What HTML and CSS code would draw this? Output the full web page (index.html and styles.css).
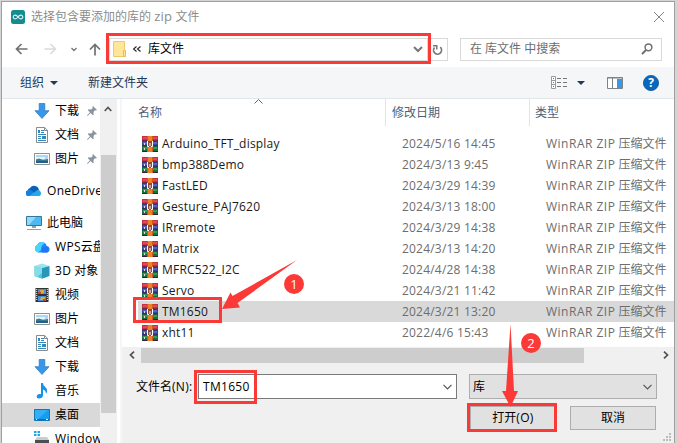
FILE: index.html
```html
<!DOCTYPE html>
<html lang="zh-CN">
<head>
<meta charset="utf-8">
<title>选择包含要添加的库的 zip 文件</title>
<link rel="stylesheet" href="styles.css">
</head>
<body>
<svg class="defs" width="0" height="0">
  <symbol id="rar" viewBox="0 0 16 16">
    <path fill="#c9303f" d="M0 0h16v5H0z"/><path fill="#e2485a" d="M1 1h14v2H1z"/>
    <path fill="#35449c" d="M0 5h16v5H0z"/><path fill="#5560c8" d="M1 6h14v2H1z"/>
    <path fill="#16713b" d="M0 10h16v5H0z"/><path fill="#2f9c58" d="M1 11h14v2H1z"/>
    <path fill="#332039" d="M0 4.500h16v.7H0zM0 9.600h16v.7H0zM0 15h16v1H0z"/>
    <path fill="#e9d5df" d="M2 7h1v2H2zM2 12h1v2H2z"/>
    <path fill="#d05a18" d="M5 0h6v16H5z"/><path fill="#ef7f28" d="M6 0h4v16H6z"/>
    <path fill="#8a4a3c" d="M5 5h6v6H5z"/><path fill="none" stroke="#fff" d="M5.500 5v5.500h1.500M10.500 5v5.500H9M8 7v3"/>
  </symbol>
  <symbol id="down" viewBox="0 0 16 16"><path fill="#3a96e6" stroke="#2377c4" stroke-width=".7" d="M5.200.5h5.600v7.200H15L8 15.500 1 7.700h4.200z"/></symbol>
  <symbol id="doc" viewBox="0 0 16 16"><path fill="#fff" stroke="#858c91" d="M2.500.5h8.200l2.800 2.800v12.200h-11z"/><path fill="none" stroke="#858c91" d="M10.500.5v3h3"/><path fill="none" stroke="#3487b9" d="M4 7.500h8M4 9.500h3M4 11.500h3M4 13.500h8M7 3.500h3M7 5.500h3"/><path fill="#3487b9" d="M4 3h2v3H4zM8 9h4v3H8z"/></symbol>
  <symbol id="pic" viewBox="0 0 16 16"><path fill="#fff" stroke="#8b9196" d="M.5 2.500h15v11H.5z"/><path fill="#acd8f5" d="M2 4h12v8H2z"/><path fill="#e9f5fb" d="M2 6h9v2H2z"/><path fill="#3d7990" d="M2 8.500l3-1 4 1.500 5-1V12H2z"/><path fill="#265e8a" d="M2 10h12v2H2z"/></symbol>
  <symbol id="cloud" viewBox="0 0 16 16"><path fill="#0a61bb" d="M2 10a3.500 3.500 0 0 1 2-5 5 5 0 0 1 9 2l-8 5z"/><path fill="#1480dd" d="M1.500 13A3 3 0 0 1 2 7.200c2-.8 3-.2 5 1.300l4 4.500z"/><path fill="#28a8ea" d="M3 13l8-5.800A3.200 3.200 0 0 1 13.500 13z"/></symbol>
  <symbol id="wps" viewBox="0 0 16 16"><path fill="#188cfa" d="M4 13.500A4 4 0 0 1 3.200 6a5 5 0 0 1 9.500 1 3.300 3.300 0 0 1 .3 6.500z"/><path fill="#46d5ff" d="M3.200 6a5 5 0 0 1 8-1.500C8 5 7 8 7 11l-3 2.500A4 4 0 0 1 3.200 6z"/><path fill="#2674f5" d="M8 9l3-1.500a3.400 3.400 0 0 1 2.500 6H8z"/></symbol>
  <symbol id="pc" viewBox="0 0 16 16"><path fill="#4db9f2" stroke="#347799" d="M.5 1.500h15v9H.5z"/><path fill="#92d9fb" d="M1 2h9l-7 8H1z"/><path fill="#8aa3af" d="M6 11h4v2H6zM1 14h14v1H1z"/></symbol>
  <symbol id="cube" viewBox="0 0 16 16"><path fill="#95e8f1" d="M.5 3L8 .5 15.500 3 8 5z"/><path fill="#50c5d5" d="M.5 3L8 5v10.800L.5 13z"/><path fill="#2698b8" d="M15.500 3L8 5v10.800l7.500-2.800z"/><path fill="#85dce8" d="M.5 3L8 5v5L3 14 .5 13z"/></symbol>
  <symbol id="film" viewBox="0 0 16 16"><path fill="#333" d="M1.500 1h13v14h-13z"/><path fill="#4a8ed8" d="M4 2h8v5H4zM4 9h8v5H4z"/><path fill="#e0ab35" d="M6 3h4v3l-3 1zM7 10h4v3H6z"/><path fill="#b84a3a" d="M4 5h3v2H4zM9 12h3v2H9z"/><path stroke="#eee" stroke-width="1" stroke-dasharray="1 1" d="M2.700 2v12M13.300 2v12"/></symbol>
  <symbol id="note" viewBox="0 0 16 16"><path fill="#1692e8" d="M7 0h2c0 4 5 4 4 9l-1 2c0-3-1.500-4-3-4.500v6c0 2-2 3-4.200 3C2 15.500 2 11.700 5 11c1-.2 1.500 0 2 .2z"/></symbol>
  <symbol id="desk" viewBox="0 0 16 16"><path fill="#169df0" stroke="#1775b2" d="M.5 2.500h15v11H.5z"/><path fill="#32aff8" d="M1 3h13L4 12H1z"/><path stroke="#156899" d="M1 12.500h14"/><path stroke="#fff" d="M2 12.500h1M12 12.500h2"/></symbol>
  <symbol id="drive" viewBox="0 0 16 16"><path fill="#20a6e5" d="M0 0h2.500v2H0zM3.500 0H6v2H3.500zM0 3h2.500v2H0zM3.500 3H6v2H3.500z"/><path fill="#c9cdd0" d="M3 6h10l2 3H1z"/><path fill="#4a4f52" d="M1 9h14v4H1z"/></symbol>
  <symbol id="pin" viewBox="0 0 10 10"><path fill="#89949e" d="M6 0l4 4-1.200.5L8 4.200 6.500 6l.2 2.400-.9.800L3.700 7 .5 10l-.5-.5L3 6.300.8 4.200l.8-.9 2.400.2L5.800 2 5.400 1z"/></symbol>
</svg>

<main class="window">
  <header class="titlebar">
    <svg class="logo" width="14" height="14" viewBox="0 0 14 14"><rect width="14" height="14" rx="2.500" fill="#128b91"/><path fill="none" stroke="#d9eeee" stroke-width="1.200" d="M7 7C5.500 4.700 2.300 4.500 2.300 7S5.500 9.300 7 7s4.700-2.500 4.700 0S8.500 9.300 7 7z"/></svg>
    <h1>选择包含要添加的库的 <i class="lt">zip</i> 文件</h1>
    <svg class="close" width="12" height="12" viewBox="0 0 12 12"><path stroke="#858585" d="M1 1l10 10M11 1L1 11"/></svg>
  </header>

  <nav class="navbar">
    <svg class="back" width="13" height="12" viewBox="0 0 13 12"><path fill="none" stroke="#707070" stroke-width="1.700" d="M12.500 6H1.500M6.500 1L1.500 6l5 5"/></svg>
    <svg class="fwd" width="13" height="12" viewBox="0 0 13 12"><path fill="none" stroke="#dadada" stroke-width="1.500" d="M.5 6h11M6.500 1l5 5-5 5"/></svg>
    <svg class="recent" width="6" height="5" viewBox="0 0 6 5"><path fill="none" stroke="#777" stroke-width="1.400" d="M.5 1L3 3.500 5.500 1"/></svg>
    <svg class="up" width="12" height="13" viewBox="0 0 12 13"><path fill="none" stroke="#707070" stroke-width="1.700" d="M6 12.500v-11M1 6.500l5-5 5 5"/></svg>
    <div class="address">
      <svg width="14" height="16" viewBox="0 0 14 16"><path fill="#ffe69b" stroke="#edc968" d="M.5.5h11v15H.5z"/><path fill="#ffe69b" stroke="#e9be4f" d="M10.500 9.500h2v6h-2z"/></svg>
      <svg class="chev" width="8" height="7" viewBox="0 0 8 7"><path fill="none" stroke="#222" stroke-width="1.100" d="M3.500.5l-3 2.500 3 2.500M7.500.5l-3 2.500 3 2.500"/></svg>
      <span>库文件</span>
      <svg class="drop" width="10" height="7" viewBox="0 0 10 7"><path fill="none" stroke="#777" stroke-width="2" d="M1 1l4 4 4-4"/></svg>
    </div>
    <div class="refresh"><svg width="11" height="12" viewBox="0 0 11 12"><path fill="none" stroke="#777" stroke-width="1.700" d="M8.300 3.200A4 4 0 1 1 2.500 3.500"/><path fill="#777" d="M1 1h4.500v4.500H4V2.600H1z"/></svg></div>
    <div class="search"><span>在 库文件 中搜索</span><svg width="12" height="12" viewBox="0 0 12 12"><circle cx="7.500" cy="4.300" r="3.400" fill="none" stroke="#707070" stroke-width="1.500"/><path stroke="#707070" stroke-width="2" d="M5 7L1 11"/></svg></div>
  </nav>

  <div class="toolbar">
    <span>组织</span><svg class="tri" width="8" height="4" viewBox="0 0 8 4"><path fill="#1e395b" d="M0 0h8L4 4z"/></svg>
    <span class="newdir">新建文件夹</span>
    <svg class="view" width="17" height="13" viewBox="0 0 17 13"><path fill="#fff" stroke="#999" d="M.5.500h4v12h-4zM.5 4.500h4M.5 8.500h4"/><path stroke="#bb5555" d="M2 2.500h1M2 10.500h1"/><path stroke="#4f77a5" d="M2 6.500h1"/><path stroke="#777" d="M6 2.500h4M12 2.500h4M6 6.500h4M12 6.500h4M6 10.500h4M12 10.500h4"/></svg>
    <svg class="tri2" width="8" height="4" viewBox="0 0 8 4"><path fill="#1e395b" d="M0 0h8L4 4z"/></svg>
    <svg class="pane" width="16" height="12" viewBox="0 0 16 12"><path fill="#fff" stroke="#7d8489" d="M.5.500h15v11H.5zM5.500 1v10"/><path fill="#3999e6" d="M10 2h5v9h-5z"/><path stroke="#7d8489" d="M0 1h16"/></svg>
    <svg class="help" width="16" height="16" viewBox="0 0 16 16"><circle cx="8" cy="8" r="7.600" fill="#0967bd" stroke="#0b569d" stroke-width=".8"/><text x="8" y="12.300" text-anchor="middle">?</text></svg>
  </div>

  <div class="body">
    <aside class="tree">
      <div class="node sub"><svg><use href="#down"/></svg><span>下载</span><svg class="pin"><use href="#pin"/></svg></div>
      <div class="node sub"><svg><use href="#doc"/></svg><span>文档</span><svg class="pin"><use href="#pin"/></svg></div>
      <div class="node sub"><svg><use href="#pic"/></svg><span>图片</span><svg class="pin"><use href="#pin"/></svg></div>
      <div class="node root"><svg><use href="#cloud"/></svg><span class="lt">OneDrive</span></div>
      <div class="node root"><svg><use href="#pc"/></svg><span>此电脑</span></div>
      <div class="node sub"><svg><use href="#wps"/></svg><span><i class="lt">WPS</i>云盘</span></div>
      <div class="node sub"><svg><use href="#cube"/></svg><span><i class="lt">3D</i> 对象</span></div>
      <div class="node sub"><svg><use href="#film"/></svg><span>视频</span></div>
      <div class="node sub"><svg><use href="#pic"/></svg><span>图片</span></div>
      <div class="node sub"><svg><use href="#doc"/></svg><span>文档</span></div>
      <div class="node sub"><svg><use href="#down"/></svg><span>下载</span></div>
      <div class="node sub"><svg><use href="#note"/></svg><span>音乐</span></div>
      <div class="node sub current"><svg><use href="#desk"/></svg><span>桌面</span></div>
      <div class="node sub"><svg><use href="#drive"/></svg><span class="lt">Windows</span></div>
    </aside>
    <div class="vscroll"><svg width="8" height="6" viewBox="0 0 8 6"><path fill="none" stroke="#555" stroke-width="1.700" d="M.7 5L4 1.500 7.300 5"/></svg><div class="vthumb"></div></div>

    <section class="main">
      <div class="columns">
        <div class="c1">名称<svg class="sort" width="9" height="5" viewBox="0 0 9 5"><path fill="none" stroke="#666" d="M.5 4.500l4-4 4 4"/></svg></div><div class="c2">修改日期</div><div class="c3">类型</div>
      </div>
      <div class="files">
        <div class="file"><svg><use href="#rar"/></svg><span class="name">Arduino_TFT_display</span><span class="date">2024/5/16 14:45</span><span class="kind"><i>WinRAR ZIP</i> 压缩文件</span></div>
        <div class="file"><svg><use href="#rar"/></svg><span class="name">bmp388Demo</span><span class="date">2024/3/13 9:45</span><span class="kind"><i>WinRAR ZIP</i> 压缩文件</span></div>
        <div class="file"><svg><use href="#rar"/></svg><span class="name">FastLED</span><span class="date">2024/3/29 14:39</span><span class="kind"><i>WinRAR ZIP</i> 压缩文件</span></div>
        <div class="file"><svg><use href="#rar"/></svg><span class="name">Gesture_PAJ7620</span><span class="date">2024/3/13 18:00</span><span class="kind"><i>WinRAR ZIP</i> 压缩文件</span></div>
        <div class="file"><svg><use href="#rar"/></svg><span class="name">IRremote</span><span class="date">2024/3/29 14:38</span><span class="kind"><i>WinRAR ZIP</i> 压缩文件</span></div>
        <div class="file"><svg><use href="#rar"/></svg><span class="name">Matrix</span><span class="date">2024/3/13 14:20</span><span class="kind"><i>WinRAR ZIP</i> 压缩文件</span></div>
        <div class="file"><svg><use href="#rar"/></svg><span class="name">MFRC522_I2C</span><span class="date">2024/4/28 14:38</span><span class="kind"><i>WinRAR ZIP</i> 压缩文件</span></div>
        <div class="file"><svg><use href="#rar"/></svg><span class="name">Servo</span><span class="date">2024/3/21 11:42</span><span class="kind"><i>WinRAR ZIP</i> 压缩文件</span></div>
        <div class="file selected"><svg><use href="#rar"/></svg><span class="name">TM1650</span><span class="date">2024/3/21 13:20</span><span class="kind"><i>WinRAR ZIP</i> 压缩文件</span></div>
        <div class="file"><svg><use href="#rar"/></svg><span class="name">xht11</span><span class="date">2022/4/6 15:43</span><span class="kind"><i>WinRAR ZIP</i> 压缩文件</span></div>
      </div>
      <div class="hscroll"><svg width="6" height="8" viewBox="0 0 6 8"><path fill="none" stroke="#505050" stroke-width="1.700" d="M5 .7L1.500 4 5 7.300"/></svg><div class="hthumb"></div><svg width="6" height="8" viewBox="0 0 6 8"><path fill="none" stroke="#505050" stroke-width="1.700" d="M1 .7L4.500 4 1 7.300"/></svg></div>
      <footer class="form">
        <div class="line">
          <label>文件名<i class="lt">(N):</i></label>
          <div class="filename"><span class="lt">TM1650</span><svg width="9" height="6" viewBox="0 0 9 6"><path fill="none" stroke="#555" stroke-width="1.200" d="M.5.800l4 4 4-4"/></svg></div>
          <div class="filter"><span>库</span><svg width="9" height="6" viewBox="0 0 9 6"><path fill="none" stroke="#555" stroke-width="1.200" d="M.5.800l4 4 4-4"/></svg></div>
        </div>
        <div class="actions"><button>打开<i class="lt">(O)</i></button><button>取消</button></div>
      </footer>
    </section>
  </div>
</main>

<svg class="marks" width="677" height="443" viewBox="0 0 677 443">
  <g fill="none" stroke="#fb3937" stroke-width="3">
    <path d="M107.500 34.500h322v28h-322zM134.500 298.500h86v23h-86zM195.500 371.500h60v31h-60zM468.500 404.500h87v26h-87z"/>
  </g>
  <g fill="#fb3937">
    <path d="M297 260l-64.500 36-2-3.500-8.500 16.500 18-1.500-2.500-4.500z"/>
    <path d="M510.500 324l-4.500 67h-4l8.500 16 7.500-16h-4z"/>
    <circle cx="294" cy="284" r="10"/><circle cx="531" cy="343" r="10"/>
  </g>
  <text x="294" y="288.500" text-anchor="middle">1</text><text x="531" y="347.500" text-anchor="middle">2</text>
</svg>
<svg class="grip" width="9" height="9" viewBox="0 0 9 9"><path fill="#bbb" d="M6 0h2v2H6zM3 3h2v2H3zM6 3h2v2H6zM0 6h2v2H0zM3 6h2v2H3zM6 6h2v2H6z"/></svg>
</body>
</html>
```
FILE: styles.css
```css
* { box-sizing: border-box; }
body {
  margin: 0; width: 677px; height: 443px; overflow: hidden; position: relative;
  background: #d4d4d4; color: #000;
  font: 12px/16px "Open Sans", "Noto Sans CJK SC", sans-serif;
}
i { font-style: normal; }
svg { display: block; flex: none; }
.defs { position: absolute; }
.lt { letter-spacing: .3px; }
.window { width: 674px; height: 450px; margin: 1px 0 0 1px; border: 1px solid #a0a0a0; background: #fff; display: flex; flex-direction: column; }

.titlebar { height: 29px; flex: none; display: flex; align-items: center; padding: 0 9px; color: #8c8c8c; }
h1 { margin: 0 0 0 6px; font-size: 12px; font-weight: 400; flex: 1; white-space: pre; }
.titlebar .lt { font-size: 13px; letter-spacing: .3px; }

.navbar { height: 36px; flex: none; display: flex; align-items: center; padding-left: 13px; }
.fwd { margin-left: 16px; }
.recent { margin-left: 14px; }
.up { margin-left: 12px; }
.address { margin-left: 8px; width: 319px; height: 23px; border: 1px solid #d9d9d9; display: flex; align-items: center; padding: 0 4px 0 3px; }
.address .chev { margin: 0 7px 0 6px; }
.address .drop { margin-left: auto; }
.refresh { width: 20px; height: 23px; border: 1px solid #d9d9d9; border-left: 0; padding: 5px 0 0 4px; }
.search { width: 202px; height: 23px; margin-left: 12px; border: 1px solid #d9d9d9; display: flex; align-items: center; justify-content: space-between; padding: 0 8px 0 9px; color: #6d6d6d; }

.toolbar { height: 32px; flex: none; background: #f4f6f8; border-bottom: 1px solid #e3e6e9; display: flex; align-items: center; padding-left: 18px; color: #1e395b; }
.tri { margin-left: 6px; }
.newdir { margin-left: 30px; flex: 1; }
.tri2 { margin-left: 9px; }
.pane { margin-left: 22px; }
.help { margin: 0 15px 0 20px; }
.help text { fill: #fff; font: 700 12px "Open Sans", sans-serif; }

.body { display: flex; flex: 1; min-height: 0; }
.tree { width: 98px; overflow: hidden; }
.node { height: 24px; display: flex; align-items: center; white-space: nowrap; }
.node svg { width: 16px; height: 16px; }
.sub { padding-left: 32px; gap: 5px; }
.root { padding-left: 24px; gap: 5px; margin: 8px 0; }
.root + .root { margin: 0; }
.node .pin { width: 10px; height: 10px; margin-left: 3px; }
.current { background: #d9d9d9; }
.vscroll { width: 17px; margin-right: 3px; background: #f0f0f0; padding: 7px 1px 0 0; display: flex; flex-direction: column; align-items: center; }
.vthumb { width: 15px; height: 258px; margin-top: 43px; background: #cdcdcd; }
.main { flex: 1; border-left: 2px solid #f6f6f6; display: flex; flex-direction: column; min-width: 0; }

.columns { height: 27px; flex: none; display: flex; color: #4c607a; line-height: 27px; }
.c1 { width: 263px; padding-left: 16px; position: relative; }
.sort { position: absolute; left: 132px; top: 0; }
.c2 { width: 144px; border-left: 1px solid #e5e5e5; padding-left: 6px; }
.c3 { flex: 1; border-left: 1px solid #e5e5e5; padding-left: 5px; }
.files { padding: 7px 0 0 16px; height: 221px; flex: none; }
.file { height: 21px; display: flex; align-items: center; padding-left: 4px; white-space: nowrap; color: #6d6d6d; }
.file svg { width: 16px; height: 16px; margin-right: 4px; }
.name { width: 240px; color: #1a1a1a; letter-spacing: .2px; }
.date { width: 144px; letter-spacing: .2px; }
.kind i { letter-spacing: .5px; }
.selected { background: #d9d9d9; }

.hscroll { height: 16px; flex: none; background: #f0f0f0; display: flex; align-items: center; padding: 0 5px 0 7px; }
.hthumb { width: 443px; height: 15px; margin: 0 auto 0 6px; background: #cdcdcd; }
.form { flex: 1; background: #f0f0f0; padding-top: 11px; }
.line { display: flex; align-items: center; height: 25px; padding-left: 14px; }
label { width: 62px; white-space: nowrap; }
.filename, .filter { height: 25px; border: 1px solid #7a7a7a; background: #fff; display: flex; align-items: center; justify-content: space-between; padding: 0 4px; }
.filename { width: 259px; }
.filter { width: 188px; margin-left: 12px; background: #e1e1e1; border-color: #adadad; padding-left: 3px; }
.actions { display: flex; gap: 14px; padding: 7px 0 0 348px; }
button { width: 86px; height: 24px; margin: 0; padding: 0; border: 1px solid #adadad; background: #e1e1e1; font: inherit; color: #000; }

.marks { position: absolute; left: 0; top: 0; }
.marks text { fill: #fff; font: 13px "Open Sans", sans-serif; }
.grip { position: absolute; left: 663px; top: 433px; }
```
